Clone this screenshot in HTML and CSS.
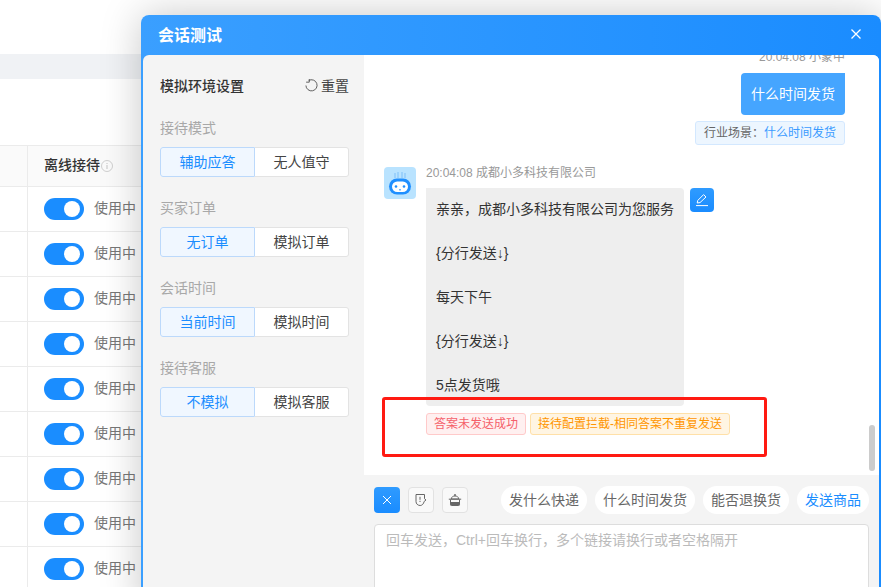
FILE: index.html
```html
<!DOCTYPE html>
<html lang="zh-CN">
<head>
    <meta charset="UTF-8">
    <meta name="viewport" content="width=device-width, initial-scale=1.0">
    <title>会话测试</title>
    <link rel="stylesheet" href="styles.css">
</head>
<body>
    <div class="page">
        <div class="band"></div>
        <div class="table">
            <div class="row head">
                <div class="cell-side"></div>
                <div class="cell">
                    <span class="th">离线接待</span>
                    <svg class="info" viewBox="0 0 12 12" width="12" height="12">
                        <circle cx="6" cy="6" r="5.5" fill="none" stroke="#c4c4c4" stroke-width="0.8"/>
                        <path d="M6 5v4M6 3v1" stroke="#c4c4c4" stroke-width="1"/>
                    </svg>
                </div>
            </div>
            <div class="row"><div class="cell-side"></div><div class="cell"><span class="switch"></span><span class="status">使用中</span></div></div>
            <div class="row"><div class="cell-side"></div><div class="cell"><span class="switch"></span><span class="status">使用中</span></div></div>
            <div class="row"><div class="cell-side"></div><div class="cell"><span class="switch"></span><span class="status">使用中</span></div></div>
            <div class="row"><div class="cell-side"></div><div class="cell"><span class="switch"></span><span class="status">使用中</span></div></div>
            <div class="row"><div class="cell-side"></div><div class="cell"><span class="switch"></span><span class="status">使用中</span></div></div>
            <div class="row"><div class="cell-side"></div><div class="cell"><span class="switch"></span><span class="status">使用中</span></div></div>
            <div class="row"><div class="cell-side"></div><div class="cell"><span class="switch"></span><span class="status">使用中</span></div></div>
            <div class="row"><div class="cell-side"></div><div class="cell"><span class="switch"></span><span class="status">使用中</span></div></div>
            <div class="row"><div class="cell-side"></div><div class="cell"><span class="switch"></span><span class="status">使用中</span></div></div>
        </div>
    </div>

    <div class="modal">
        <div class="modal-head">
            <h2 class="modal-title">会话测试</h2>
            <svg class="close" viewBox="0 0 10 10" width="10" height="10">
                <path d="M0.5 0.5l9 9M9.5 0.5l-9 9" stroke="#fff" stroke-width="1.3" fill="none"/>
            </svg>
        </div>
        <div class="modal-body">
            <div class="settings">
                <div class="settings-top">
                    <span class="settings-title">模拟环境设置</span>
                    <span class="reset">
                        <svg viewBox="0 0 14 14" width="13" height="13">
                            <path d="M4 1.6A6 6 0 1 1 1 7" fill="none" stroke="#555" stroke-width="1"/>
                            <path d="M4.6 0v3.4H1.2" fill="none" stroke="#555" stroke-width="1"/>
                        </svg>
                        重置
                    </span>
                </div>
                <div class="group">
                    <div class="group-label">接待模式</div>
                    <div class="choice"><span class="opt active">辅助应答</span><span class="opt">无人值守</span></div>
                </div>
                <div class="group">
                    <div class="group-label">买家订单</div>
                    <div class="choice"><span class="opt active">无订单</span><span class="opt">模拟订单</span></div>
                </div>
                <div class="group">
                    <div class="group-label">会话时间</div>
                    <div class="choice"><span class="opt active">当前时间</span><span class="opt">模拟时间</span></div>
                </div>
                <div class="group">
                    <div class="group-label">接待客服</div>
                    <div class="choice"><span class="opt active">不模拟</span><span class="opt">模拟客服</span></div>
                </div>
            </div>

            <div class="main">
                <div class="chat">
                    <div class="msg-buyer">
                        <div class="meta">20:04:08 小蒙中</div>
                        <div class="bubble-blue">什么时间发货</div>
                        <div class="scene">行业场景：<span class="scene-link">什么时间发货</span></div>
                    </div>
                    <div class="msg-bot">
                        <svg class="avatar" viewBox="0 0 32 32" width="32" height="32">
                            <rect width="32" height="32" rx="4" fill="#b9e3ff"/>
                            <path d="M11 6v5M14 5v6M18 5v6M21 6v5" stroke="#6db6f7" stroke-width="0.8"/>
                            <rect x="5" y="11.5" width="22" height="16" rx="8" fill="#1f8fff"/>
                            <rect x="8" y="14.5" width="16" height="10.5" rx="5.2" fill="#fff"/>
                            <circle cx="12" cy="19.5" r="1.3" fill="#1f8fff"/>
                            <circle cx="20" cy="19.5" r="1.3" fill="#1f8fff"/>
                            <rect x="15.2" y="22.2" width="1.6" height="1.2" fill="#1f8fff"/>
                        </svg>
                        <div class="bot-content">
                            <div class="meta-bot">20:04:08 成都小多科技有限公司</div>
                            <div class="bubble-line">
                                <div class="bubble-gray">亲亲，成都小多科技有限公司为您服务<br><br>{分行发送↓}<br><br>每天下午<br><br>{分行发送↓}<br><br>5点发货哦</div>
                                <span class="edit">
                                    <svg viewBox="0 0 14 14" width="14" height="14">
                                        <path d="M2.2 10L2.8 7.4 8.6 1.6l2.4 2.4L5 9.6z" fill="none" stroke="#fff" stroke-width="1"/>
                                        <path d="M1 12.6h12" stroke="#fff" stroke-width="1"/>
                                    </svg>
                                </span>
                            </div>
                            <div class="tags">
                                <span class="tag tag-red">答案未发送成功</span>
                                <span class="tag tag-orange">接待配置拦截-相同答案不重复发送</span>
                            </div>
                        </div>
                    </div>
                    <div class="highlight"></div>
                    <div class="scrollbar"></div>
                </div>

                <div class="composer">
                    <div class="toolbar">
                        <span class="tool tool-on">
                            <svg viewBox="0 0 10 10" width="10" height="10">
                                <path d="M1 1l8 8M9 1l-8 8" stroke="#fff" stroke-width="1" fill="none"/>
                            </svg>
                        </span>
                        <span class="tool">
                            <svg viewBox="0 0 14 14" width="14" height="14">
                                <path d="M2 1.5h8.5v4.2L12 7l-1.8 1.4C9.6 11 8 12.5 6.2 12.5 3.8 12.5 2 10.8 2 8.5z" fill="none" stroke="#666" stroke-width="1"/>
                                <path d="M6 3.8v3M6 7.8V9" stroke="#666" stroke-width="1"/>
                            </svg>
                        </span>
                        <span class="tool">
                            <svg viewBox="0 0 14 14" width="14" height="14">
                                <path d="M7 1v2" stroke="#666" stroke-width="1.4"/>
                                <path d="M3.2 6C3.6 3.8 5 3 7 3s3.4.8 3.8 3z" fill="none" stroke="#666" stroke-width="1"/>
                                <path d="M.8 6.2h12.4" stroke="#666" stroke-width="1"/>
                                <path d="M2.5 6.5v5.2c0 .5.3.8.8.8h7.4c.5 0 .8-.3.8-.8V6.5" fill="none" stroke="#666" stroke-width="1"/>
                                <path d="M2.5 9h9v3.2h-9z" fill="#666"/>
                            </svg>
                        </span>
                        <div class="chips">
                            <span class="chip">发什么快递</span>
                            <span class="chip">什么时间发货</span>
                            <span class="chip">能否退换货</span>
                            <span class="chip chip-link">发送商品</span>
                        </div>
                    </div>
                    <textarea class="input" placeholder="回车发送，Ctrl+回车换行，多个链接请换行或者空格隔开"></textarea>
                </div>
            </div>
        </div>
    </div>
</body>
</html>
```

FILE: styles.css
```css
* {
    margin: 0;
    padding: 0;
    box-sizing: border-box;
    font-family: "Liberation Sans", "Noto Sans CJK SC", sans-serif;
}

html, body {
    width: 881px;
    height: 587px;
    overflow: hidden;
    background: #fff;
}

body {
    position: relative;
}

/* page behind the dialog */
.page {
    padding-top: 54px;
}

.band {
    height: 25px;
    background: #f0f2f5;
}

.table {
    margin-top: 66px;
    border-top: 1px solid #ebebeb;
}

.row {
    display: flex;
    height: 45px;
    border-bottom: 1px solid #ebebeb;
}

.row.head {
    height: 41px;
    background: #fafafa;
}

.cell-side {
    width: 28px;
    border-right: 1px solid #ebebeb;
}

.cell {
    flex: 1;
    display: flex;
    align-items: center;
    padding-left: 16px;
}

.th {
    margin-bottom: 4px;
    font-size: 14px;
    font-weight: 500;
    color: #333;
}

.info {
    margin-left: 1px;
}

.switch {
    position: relative;
    width: 40px;
    height: 22px;
    border-radius: 11px;
    background: #1a8dff;
}

.switch::after {
    content: "";
    position: absolute;
    right: 4px;
    top: 3px;
    width: 16px;
    height: 16px;
    border-radius: 50%;
    background: #fff;
}

.status {
    margin-left: 10px;
    margin-bottom: 4px;
    font-size: 14px;
    color: #777;
}

/* dialog */
.modal {
    position: absolute;
    left: 141px;
    top: 15px;
    width: 740px;
    height: 600px;
    display: flex;
    flex-direction: column;
    padding: 0 2px;
    border-radius: 8px 8px 0 0;
    background: linear-gradient(90deg, #3a9fff, #1a8cff);
    box-shadow: 0 0 40px rgba(0, 0, 0, 0.22);
}

.modal-head {
    height: 40px;
    flex: none;
    display: flex;
    align-items: center;
    justify-content: space-between;
    padding: 0 18px 2px 15px;
}

.modal-title {
    font-size: 16px;
    font-weight: 700;
    color: #fff;
}

.modal-body {
    flex: 1;
    display: flex;
    border-radius: 6px 6px 0 0;
    overflow: hidden;
    background: #f4f4f4;
}

.settings {
    width: 221px;
    flex: none;
    padding: 20px 15px 0 17px;
}

.settings-top {
    display: flex;
    align-items: center;
    justify-content: space-between;
    height: 22px;
    padding-bottom: 2px;
}

.settings-title {
    font-size: 14px;
    font-weight: 500;
    color: #333;
}

.reset {
    display: flex;
    align-items: center;
    gap: 3px;
    font-size: 14px;
    color: #444;
}

.group {
    margin-top: 21px;
}

.group-label {
    font-size: 14px;
    line-height: 20px;
    margin-bottom: 9px;
    color: #a8a8a8;
}

.choice {
    display: flex;
    height: 30px;
    border-radius: 3px;
    background: #fff;
}

.opt {
    flex: 1;
    display: flex;
    align-items: center;
    justify-content: center;
    padding-bottom: 2px;
    font-size: 14px;
    color: #444;
    border: 1px solid #e3e3e3;
    border-left: 0;
    border-radius: 0 3px 3px 0;
}

.opt.active {
    color: #1a8dff;
    background: #f0f7ff;
    border: 1px solid #bcd9fb;
    border-radius: 3px 0 0 3px;
}

.main {
    flex: 1;
    min-width: 0;
}

.chat {
    position: relative;
    height: 420px;
    padding: 0 34px 0 20px;
    background: #fff;
    overflow: hidden;
}

.msg-buyer {
    display: flex;
    flex-direction: column;
    align-items: flex-end;
    margin-top: -7px;
}

.meta {
    font-size: 12px;
    line-height: 18px;
    color: #999;
}

.bubble-blue {
    margin-top: 7px;
    padding: 10px;
    font-size: 14px;
    line-height: 22px;
    color: #fff;
    background: #45a5ff;
    border-radius: 4px 0 4px 4px;
}

.scene {
    margin-top: 6px;
    height: 24px;
    padding: 0 8px;
    font-size: 12px;
    line-height: 22px;
    color: #666;
    background: #edf6ff;
    border: 1px solid #d3e8ff;
    border-radius: 3px;
}

.scene-link {
    color: #3a9bff;
}

.msg-bot {
    display: flex;
    align-items: flex-start;
    gap: 10px;
    margin-top: 22px;
}

.avatar {
    flex: none;
}

.meta-bot {
    height: 21px;
    font-size: 12px;
    line-height: 12px;
    color: #999;
}

.bubble-line {
    display: flex;
    align-items: flex-start;
    gap: 6px;
}

.bubble-gray {
    padding: 10px;
    font-size: 14px;
    line-height: 22px;
    color: #333;
    background: #eee;
    border-radius: 0 4px 4px 4px;
}

.edit {
    display: flex;
    align-items: center;
    justify-content: center;
    width: 24px;
    height: 24px;
    border-radius: 4px;
    background: linear-gradient(180deg, #2f9bff, #1a8cff);
}

.tags {
    display: flex;
    gap: 4px;
    margin-top: 7px;
}

.tag {
    height: 22px;
    padding: 0 7px;
    font-size: 12px;
    line-height: 20px;
    border-radius: 3px;
    border: 1px solid;
}

.tag-red {
    color: #f5606a;
    background: #fff0f0;
    border-color: #ffcaca;
}

.tag-orange {
    color: #ff9500;
    background: #fff5e3;
    border-color: #ffe0a8;
}

.highlight {
    position: absolute;
    left: 18px;
    top: 342px;
    width: 385px;
    height: 60px;
    border: 3px solid #ff1a12;
    border-radius: 3px;
}

.scrollbar {
    position: absolute;
    right: 4px;
    top: 370px;
    width: 6px;
    height: 46px;
    border-radius: 3px;
    background: #ccc;
}

.composer {
    padding: 11px 10px 0;
}

.toolbar {
    display: flex;
    align-items: center;
    gap: 8px;
}

.tool {
    display: flex;
    align-items: center;
    justify-content: center;
    width: 26px;
    height: 26px;
    border: 1px solid #e2e2e2;
    border-radius: 4px;
    background: #f9f9f9;
}

.tool-on {
    border: 0;
    background: linear-gradient(180deg, #2f9bff, #1a8cff);
}

.chips {
    display: flex;
    gap: 8px;
    margin-left: auto;
}

.chip {
    height: 28px;
    padding: 0 8px;
    font-size: 14px;
    line-height: 28px;
    color: #666;
    background: #fff;
    border-radius: 14px;
}

.chip-link {
    color: #1a8dff;
}

.input {
    display: block;
    width: 100%;
    height: 110px;
    margin-top: 10px;
    padding: 5px 11px;
    font-size: 14px;
    line-height: 20px;
    border: 1px solid #ddd;
    border-radius: 4px;
    outline: 0;
    resize: none;
    background: #fff;
}

.input::placeholder {
    color: #bbb;
}
```
